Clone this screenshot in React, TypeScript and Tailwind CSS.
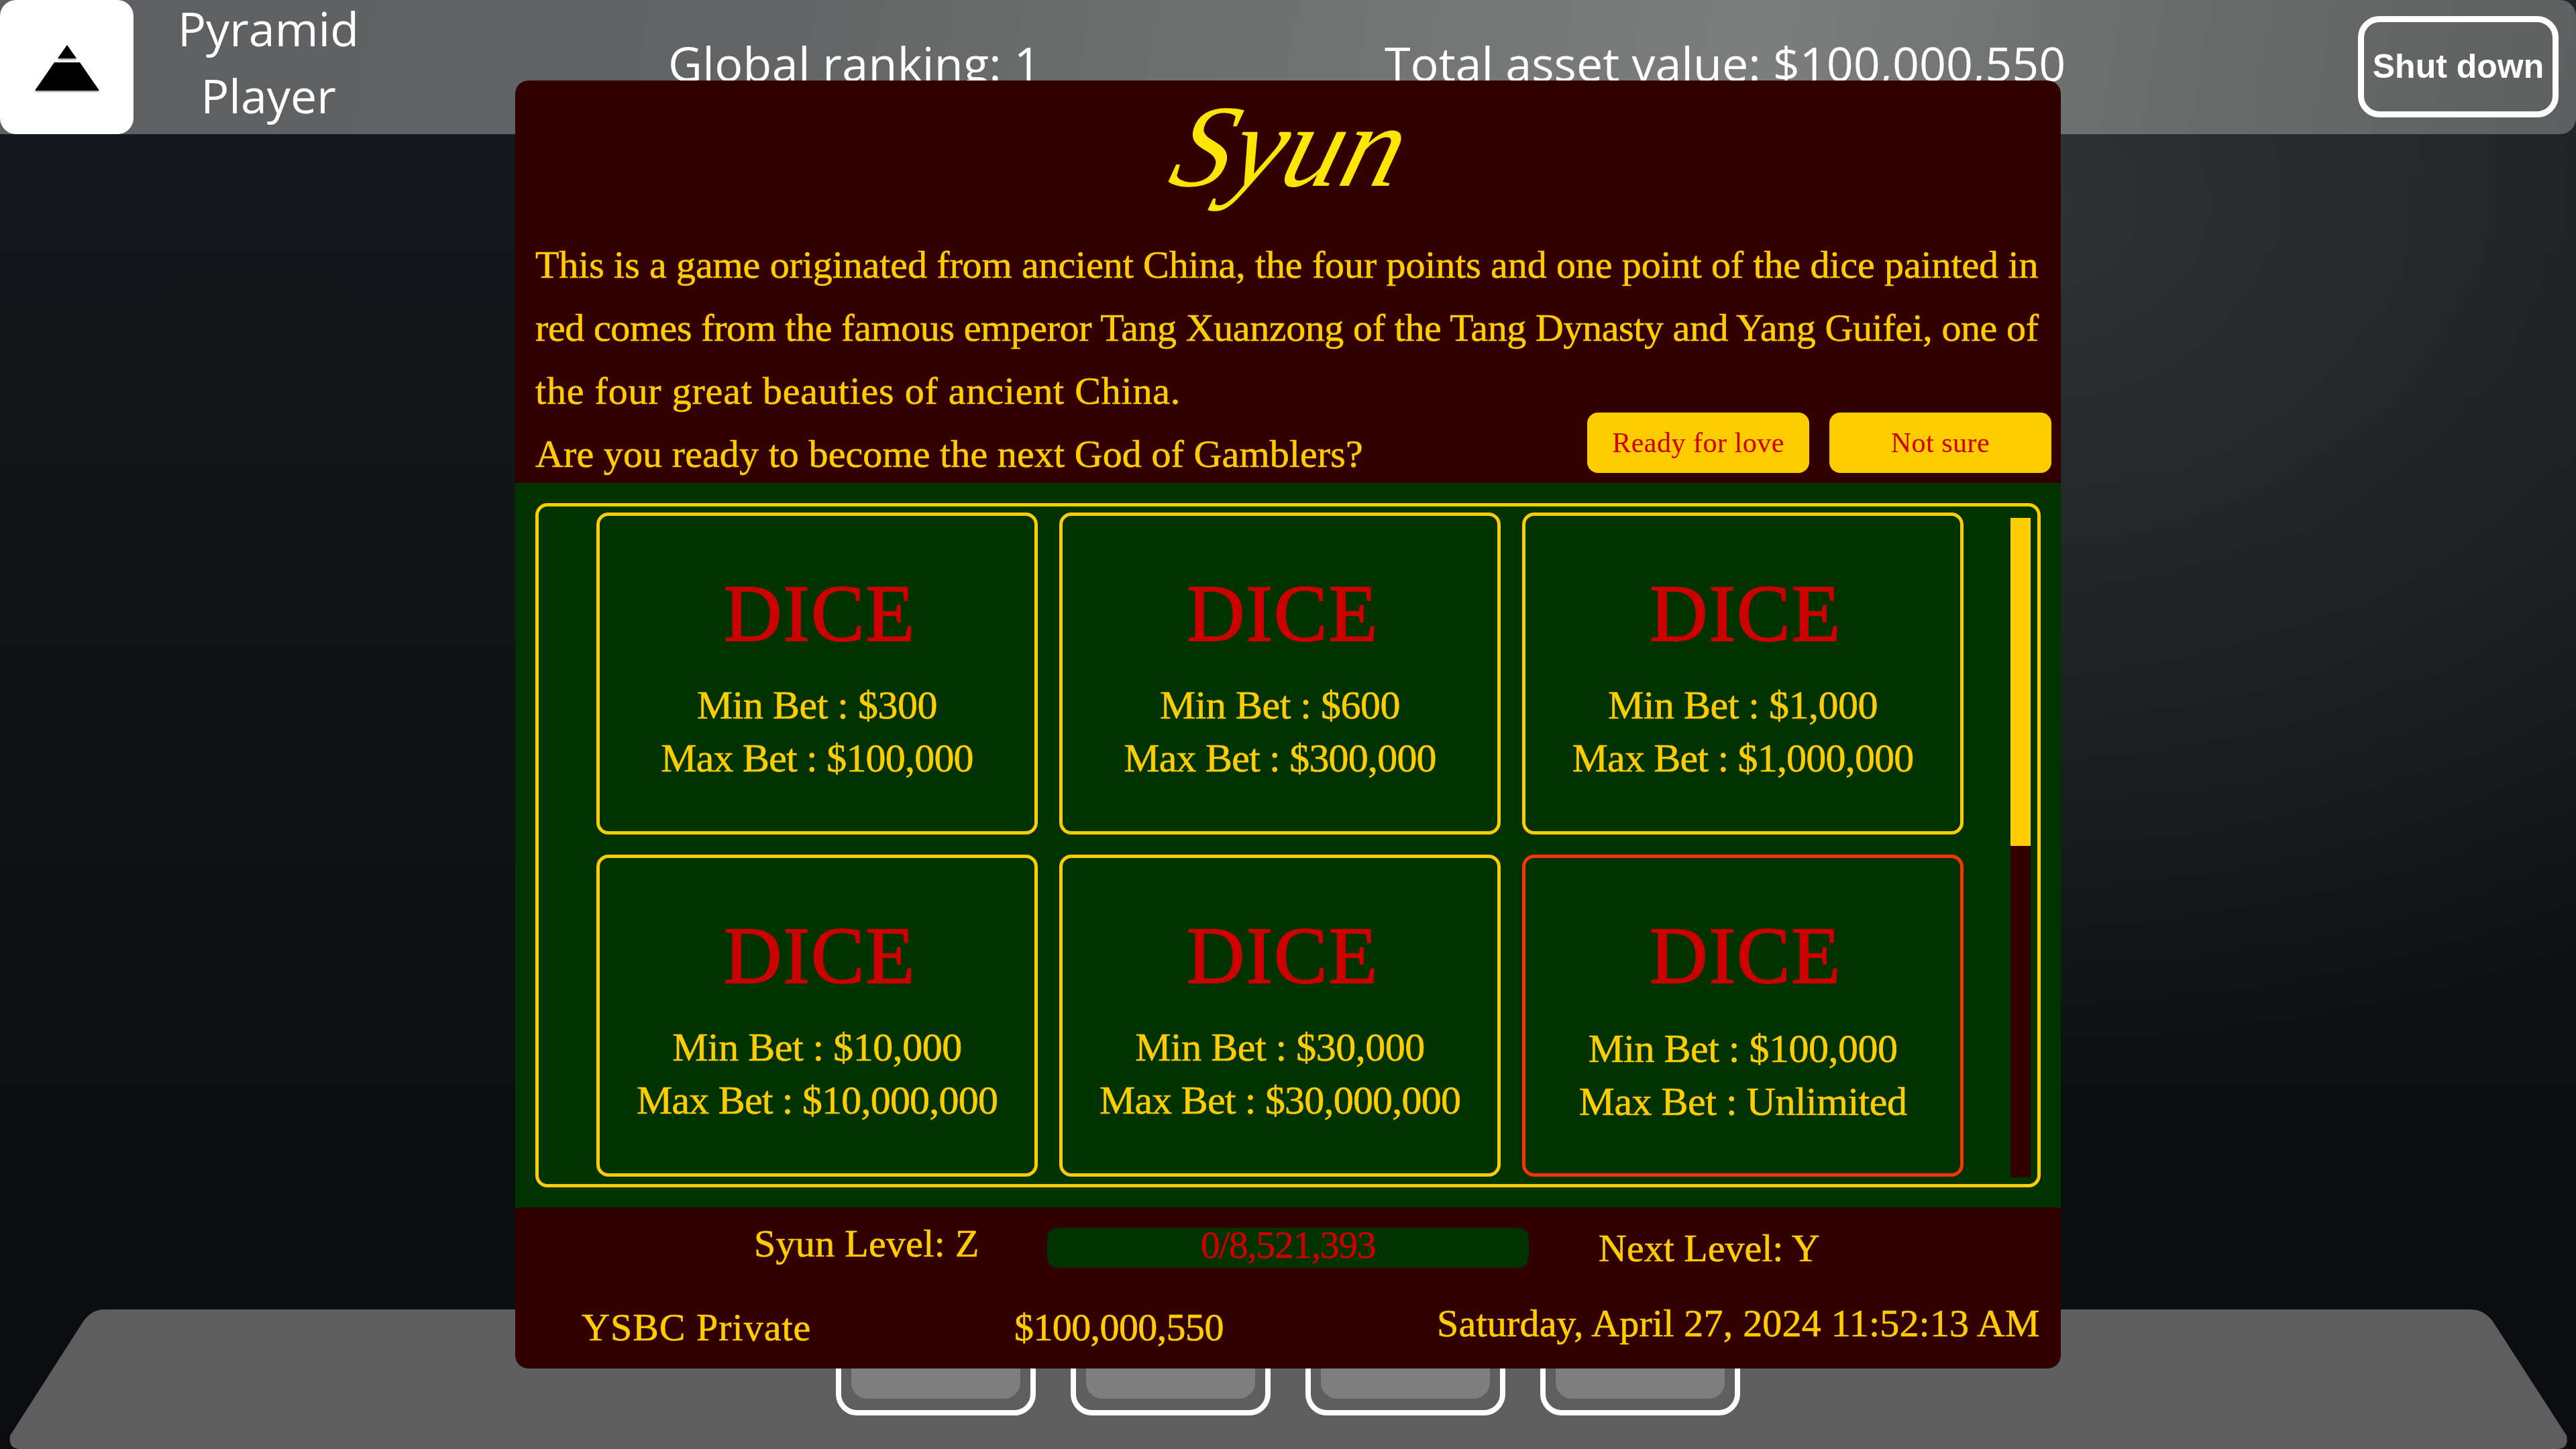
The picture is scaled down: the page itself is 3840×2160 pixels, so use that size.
const serif = "font-['Liberation_Serif',serif]";

const tables = [
  { min: "$300", max: "$100,000" },
  { min: "$600", max: "$300,000" },
  { min: "$1,000", max: "$1,000,000" },
  { min: "$10,000", max: "$10,000,000" },
  { min: "$30,000", max: "$30,000,000" },
  { min: "$100,000", max: "Unlimited", active: true },
];

function PyramidLogo() {
  return (
    <svg width="96" height="70" viewBox="0 0 96 70" className="mt-[4px] drop-shadow-[0_2px_1px_rgba(0,0,0,0.4)]">
      <polygon points="48,0 62,20 34,20" fill="#000" />
      <polygon points="29,26 67,26 96,68 0,68" fill="#000" />
    </svg>
  );
}

function TopBar() {
  return (
    <div className="flex h-[200px] w-full shrink-0 rounded-r-[24px] bg-[linear-gradient(100deg,#5d5f61_0%,#626465_30%,#7c7e7e_68%,#6a6c6c_84%,#5e5f60_100%)] font-['Open_Sans',sans-serif] text-white">
      <div className="flex h-[200px] w-[199px] shrink-0 items-center justify-center rounded-[24px] bg-white">
        <PyramidLogo />
      </div>
      <div className="ml-[64px] w-[274px] shrink-0 text-center text-[70px]">
        <div className="leading-[84px]">Pyramid</div>
        <div className="mt-[8px] leading-[100px]">Player</div>
      </div>
      <div className="ml-[459px] w-[1068px] shrink-0 pt-[44px] text-[70px] leading-[100px] tracking-[0.3px] whitespace-nowrap">Global ranking: 1</div>
      <div className="w-[1451px] shrink-0 pt-[44px] text-[70px] leading-[100px] whitespace-nowrap">Total asset value: $100,000,550</div>
      <button className="mt-[24px] h-[151px] w-[299px] shrink-0 rounded-[32px] border-[9px] border-white font-['Liberation_Sans',sans-serif] text-[50px] font-bold text-white">
        Shut down
      </button>
    </div>
  );
}

function Tray() {
  return (
    <div className="relative h-[208px] w-full shrink-0">
      <svg className="absolute inset-0" width="3840" height="208" viewBox="0 0 3840 208">
        <path
          d="M155 0 H3683 Q3706 0 3720 24 L3826 188 Q3830 208 3812 208 H30 Q12 208 15 188 L122 21 Q135 0 155 0 Z"
          fill="#5e5e5e"
        />
      </svg>
      <div className="relative flex justify-center gap-[52px] pt-[8px]">
        {[0, 1, 2, 3].map((i) => (
          <div key={i} className="h-[150px] w-[298px] rounded-[32px] border-[8px] border-white px-[15px] pb-[17px]">
            <div className="h-full rounded-b-[24px] bg-[#7e7e7e]" />
          </div>
        ))}
      </div>
    </div>
  );
}

function TableCard({ min, max, active }: { min: string; max: string; active?: boolean }) {
  return (
    <div
      className={`flex h-[480px] w-[658px] flex-col items-center rounded-[18px] border-[5px] pt-[76px] ${
        active ? "border-[#ff3300]" : "border-[#ffcc00]"
      }`}
    >
      <div className="pl-[8px] text-[120px] leading-[140px] tracking-[1.5px] text-[#cc0000] [-webkit-text-stroke:2px_#cc0000]">DICE</div>
      <div className={`${active ? "mt-[29px]" : "mt-[27px]"} text-[60px] leading-[79px] tracking-[-0.5px] text-[#ffcc00] [-webkit-text-stroke:0.6px_#ffcc00]`}>
        Min Bet : {min}
      </div>
      <div className={`text-[60px] leading-[79px] ${active ? "tracking-[-0.5px]" : "tracking-[-0.8px]"} text-[#ffcc00] [-webkit-text-stroke:0.6px_#ffcc00]`}>
        Max Bet : {max}
      </div>
    </div>
  );
}

function SyunModal() {
  return (
    <div className={`absolute left-[768px] top-[120px] flex h-[1920px] w-[2304px] flex-col overflow-hidden rounded-[20px] bg-[#330000] ${serif}`}>
      <div className="relative h-[600px] shrink-0 px-[30px] text-[#ffcc00]">
        <div className="flex h-[228px] justify-center text-[175px] italic leading-[196px] text-[#ffe600]">
          <div className="-skew-x-[16deg]">Syun</div>
        </div>
        <div className="text-[58px] leading-[94px] [-webkit-text-stroke:0.6px_#ffcc00]">
          <div className="tracking-[-0.1px] whitespace-nowrap">This is a game originated from ancient China, the four points and one point of the dice painted in</div>
          <div className="tracking-[-0.4px] whitespace-nowrap">red comes from the famous emperor Tang Xuanzong of the Tang Dynasty and Yang Guifei, one of</div>
          <div className="tracking-[0.8px] whitespace-nowrap">the four great beauties of ancient China.</div>
          <div className="tracking-[0.1px] whitespace-nowrap">Are you ready to become the next God of Gamblers?</div>
        </div>
        <div className="absolute right-[14px] top-[495px] flex gap-[30px]">
          <button className="h-[90px] w-[331px] rounded-[16px] bg-[#ffcc00] text-[42px] tracking-[0.5px] text-[#cc0000]">Ready for love</button>
          <button className="h-[90px] w-[331px] rounded-[16px] bg-[#ffcc00] text-[42px] tracking-[0.5px] text-[#cc0000]">Not sure</button>
        </div>
      </div>

      <div className="h-[1080px] shrink-0 bg-[#003300] px-[30px] pt-[30px]">
        <div className="flex h-[1020px] rounded-[18px] border-[5px] border-[#ffcc00] pl-[86px] pt-[9px]">
          <div className="grid w-[2038px] grid-cols-[658px_658px_658px] content-start gap-x-[32px] gap-y-[30px]">
            {tables.map((t) => (
              <TableCard key={t.min} min={t.min} max={t.max} active={t.active} />
            ))}
          </div>
          <div className="ml-[70px] mt-[8px] h-[983px] w-[30px] bg-[#330000]">
            <div className="h-[489px] bg-[#ffcc00]" />
          </div>
        </div>
      </div>

      <div className="flex-1 text-[58px] text-[#ffcc00] [-webkit-text-stroke:0.6px_#ffcc00]">
        <div className="flex h-[120px] items-start pt-[24px]">
          <div className="ml-[356px] w-[333px] leading-[60px] tracking-[0.3px] whitespace-nowrap">Syun Level: Z</div>
          <div className="ml-[104px] mt-[6px] h-[60px] w-[718px] rounded-[16px] bg-[#003300] text-center leading-[52px] tracking-[-1.5px] text-[#cc0000] [-webkit-text-stroke:0.6px_#cc0000]">
            0/8,521,393
          </div>
          <div className="ml-[104px] mt-[7px] leading-[60px] whitespace-nowrap">Next Level: Y</div>
        </div>
        <div className="flex items-start">
          <div className="ml-[99px] w-[343px] pt-[29px] leading-[60px] tracking-[1px] whitespace-nowrap">YSBC Private</div>
          <div className="ml-[302px] w-[310px] pt-[29px] leading-[60px] tracking-[-0.6px] whitespace-nowrap">$100,000,550</div>
          <div className="ml-[320px] pt-[23px] leading-[60px] tracking-[0.2px] whitespace-nowrap">Saturday, April 27, 2024 11:52:13 AM</div>
        </div>
      </div>
    </div>
  );
}

export default function App() {
  return (
    <div className="relative flex h-[2160px] w-[3840px] flex-col overflow-hidden bg-[radial-gradient(ellipse_1700px_1300px_at_78%_14%,#303234,transparent),linear-gradient(to_bottom,#15191d,#0b0c0f)]">
      <TopBar />
      <div className="flex-1" />
      <Tray />
      <SyunModal />
    </div>
  );
}
